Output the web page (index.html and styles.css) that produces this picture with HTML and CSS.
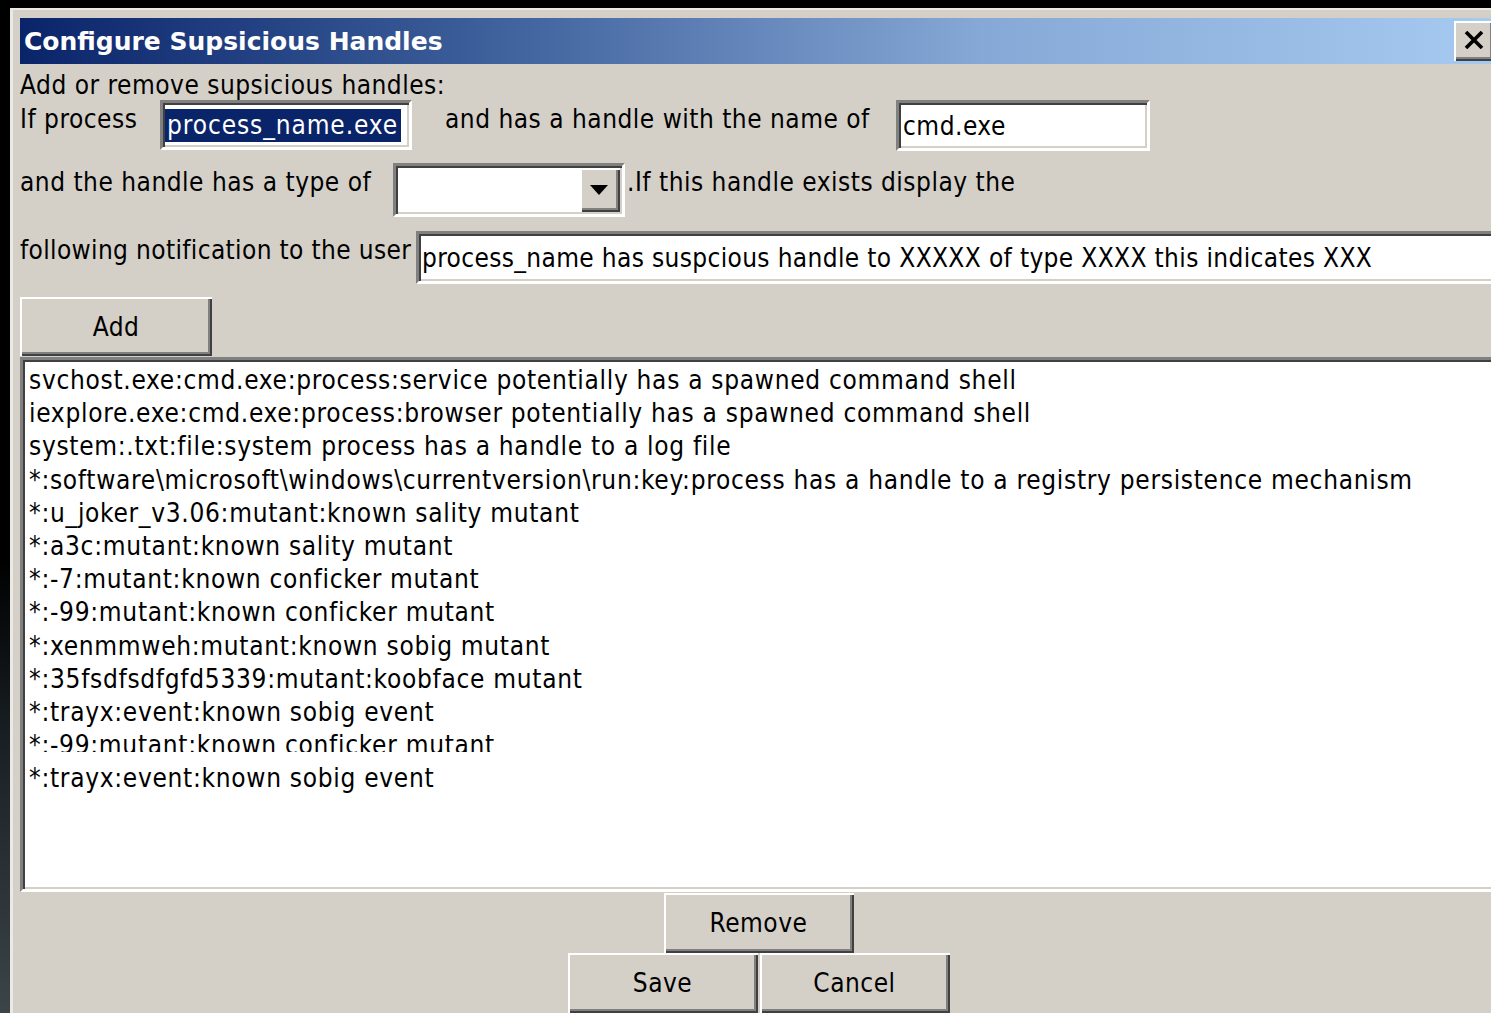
FILE: index.html
```html
<!DOCTYPE html>
<html>
<head>
<meta charset="utf-8">
<title>Configure Supsicious Handles</title>
<link rel="stylesheet" href="styles.css">
</head>
<body>
<div class="window">
  <div class="titlebar">
    <span class="title">Configure Supsicious Handles</span>
    <button class="close" aria-label="Close">
      <svg width="20" height="18" viewBox="0 0 20 18"><path d="M2 1 L18 17 M18 1 L2 17" stroke="#000" stroke-width="3.6" fill="none"/></svg>
    </button>
  </div>
  <div class="content">
    <div class="intro">Add or remove supsicious handles:</div>

    <div class="row row-process">
      <span class="label label-process">If process</span>
      <div class="field field-process"><span class="selected">process_name.exe</span></div>
      <span class="label label-name">and has a handle with the name of</span>
      <div class="field field-name">cmd.exe</div>
    </div>

    <div class="row row-type">
      <span class="label label-type">and the handle has a type of</span>
      <div class="combo">
        <div class="combo-value"></div>
        <div class="combo-button">
          <svg width="18" height="10" viewBox="0 0 18 10"><path d="M0 0 H18 L9 10 Z" fill="#000"/></svg>
        </div>
      </div>
      <span class="label label-exists">.If this handle exists display the</span>
    </div>

    <div class="row row-message">
      <span class="label label-message">following notification to the user</span>
      <div class="field field-message">process_name has suspcious handle to XXXXX of type XXXX this indicates XXX</div>
    </div>

    <div class="add-row">
      <button class="btn btn-add">Add</button>
    </div>

    <div class="listbox">
      <div class="item">svchost.exe:cmd.exe:process:service potentially has a spawned command shell</div>
      <div class="item">iexplore.exe:cmd.exe:process:browser potentially has a spawned command shell</div>
      <div class="item">system:.txt:file:system process has a handle to a log file</div>
      <div class="item">*:software\microsoft\windows\currentversion\run:key:process has a handle to a registry persistence mechanism</div>
      <div class="item">*:u_joker_v3.06:mutant:known sality mutant</div>
      <div class="item">*:a3c:mutant:known sality mutant</div>
      <div class="item">*:-7:mutant:known conficker mutant</div>
      <div class="item">*:-99:mutant:known conficker mutant</div>
      <div class="item">*:xenmmweh:mutant:known sobig mutant</div>
      <div class="item">*:35fsdfsdfgfd5339:mutant:koobface mutant</div>
      <div class="item">*:trayx:event:known sobig event</div>
      <div class="item item-cut">*:-99:mutant:known conficker mutant</div>
      <div class="item">*:trayx:event:known sobig event</div>
    </div>

    <div class="actions">
      <button class="btn btn-wide">Remove</button>
      <div class="pair">
        <button class="btn btn-wide">Save</button>
        <button class="btn btn-wide">Cancel</button>
      </div>
    </div>
  </div>
</div>
</body>
</html>
```

FILE: styles.css
```css
* { box-sizing: border-box; }

html, body {
  margin: 0;
  padding: 0;
}

body {
  width: 1491px;
  height: 1013px;
  overflow: hidden;
  background: linear-gradient(180deg, #000 0%, #000 55%, #1c2327 75%, #3b4447 100%);
  font-family: "DejaVu Sans Condensed", "DejaVu Sans", sans-serif;
  font-size: 26px;
  letter-spacing: 0.5px;
  color: #000;
}

/* dialog frame */
.window {
  margin: 8px 0 0 10px;
  width: 1520px;
  height: 1030px;
  background: #d4d0c8;
  border-top: 2px solid #ebe9e4;
  border-left: 3px solid #ebe9e4;
  padding: 8px 0 0 7px;
}

.titlebar {
  width: 1477px;
  height: 46px;
  display: flex;
  align-items: center;
  padding-left: 4px;
  background: linear-gradient(90deg, #0a246a 0%, #3a5c98 30%, #86a8d6 65%, #a6caf0 100%);
}

.title {
  color: #fff;
  font-family: "DejaVu Sans", sans-serif;
  font-weight: bold;
  font-size: 25px;
  letter-spacing: 0;
}

.close {
  margin-left: auto;
  margin-right: 3px;
  width: 40px;
  height: 40px;
  padding: 0;
  border: none;
  background: #d4d0c8;
  box-shadow: inset 2px 2px 0 #fff, inset -2px -2px 0 #404040, inset -4px -4px 0 #808080;
  display: flex;
  align-items: center;
  justify-content: center;
}

.close svg { display: block; margin: -2px 0 0 -1px; }

.content {
  width: 1477px;
}

.intro {
  height: 36px;
  line-height: 34px;
  padding-top: 4px;
  white-space: nowrap;
}

.row {
  display: flex;
  align-items: flex-start;
  white-space: nowrap;
}

.row-process { height: 63px; }
.row-type { height: 68px; }
.row-message { height: 66px; }

.label {
  display: block;
  line-height: 34px;
  padding-top: 2px;
}

.label-process { width: 140px; }
.label-name { width: 484px; padding-left: 33px; }
.label-type { width: 373px; }
.label-exists { padding-left: 2px; }
.label-message { width: 396px; letter-spacing: 0.35px; }

/* sunken edit fields */
.field {
  display: flex;
  align-items: center;
  background: #fff;
  border-style: solid;
  border-width: 3px;
  border-color: #808080 #fff #fff #808080;
  box-shadow: inset 2px 2px 0 #404040, inset -2px -2px 0 #d4d0c8;
  padding-left: 4px;
  white-space: nowrap;
  overflow: hidden;
}

.field-process { width: 252px; height: 50px; padding-left: 2px; }
.field-name { width: 254px; height: 51px; }
.field-message { flex: 1; height: 53px; padding-left: 3px; letter-spacing: 0.35px; }

.selected {
  background: #0a246a;
  color: #fff;
  line-height: 33px;
  padding: 0 3px 0 2px;
  letter-spacing: 0.9px;
}

.combo {
  width: 232px;
  height: 54px;
  display: flex;
  background: #fff;
  border-style: solid;
  border-width: 3px;
  border-color: #808080 #fff #fff #808080;
  box-shadow: inset 2px 2px 0 #404040, inset -2px -2px 0 #d4d0c8;
  padding: 2px;
}

.combo-value { flex: 1; }

.combo-button {
  width: 40px;
  background: #d4d0c8;
  box-shadow: inset 2px 2px 0 #fff, inset -2px -2px 0 #404040, inset -4px -4px 0 #808080;
  display: flex;
  align-items: center;
  justify-content: center;
}

.combo-button svg { display: block; margin: 0 2px 0 0; }

/* raised push buttons */
.btn {
  display: block;
  padding: 0;
  border: none;
  background: #d4d0c8;
  color: #000;
  font: inherit;
  letter-spacing: inherit;
  box-shadow: inset 2px 2px 0 #fff, inset -2px -2px 0 #404040, inset -4px -4px 0 #808080;
}

.add-row { height: 60px; }
.btn-add { width: 192px; height: 59px; }

.listbox {
  height: 535px;
  background: #fff;
  border-style: solid;
  border-width: 3px;
  border-color: #808080 #fff #fff #808080;
  box-shadow: inset 2px 2px 0 #404040, inset -2px -2px 0 #d4d0c8;
  padding: 4px 0 0 6px;
  white-space: nowrap;
  overflow: hidden;
  letter-spacing: 0.7px;
}

.item {
  line-height: 33.2px;
  height: 33.2px;
}

/* the twelfth row is drawn half-repainted: its lower part is blank */
.item-cut {
  height: 22.5px;
  overflow: hidden;
  margin-bottom: 10.7px;
}

.actions {
  padding-top: 1px;
  display: flex;
  flex-direction: column;
  align-items: center;
}

.pair {
  display: flex;
  gap: 2px;
}

.btn-wide { width: 190px; height: 60px; }
```
